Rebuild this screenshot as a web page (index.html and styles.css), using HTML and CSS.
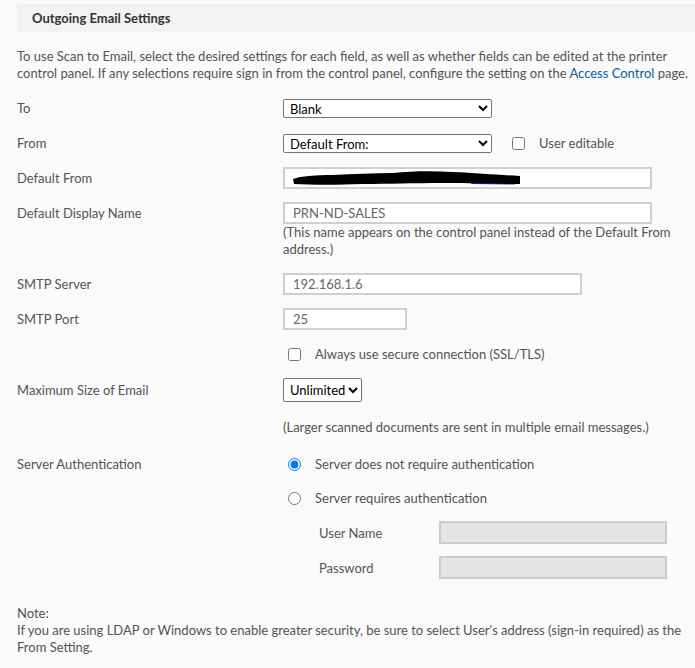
FILE: index.html
```html
<!DOCTYPE html>
<html lang="en">
    <head>
        <meta charset="UTF-8" />
        <meta name="viewport" content="width=device-width, initial-scale=1.0" />
        <title>Outgoing Email Settings</title>
        <link rel="stylesheet" href="styles.css">
    </head>
    <body>
        <main class="page">
            <h2 class="section-title">Outgoing Email Settings</h2>
            <p class="intro">
                To use Scan to Email, select the desired settings for each field, as well as whether fields can be edited at the printer
                control panel. If any selections require sign in from the control panel, configure the setting on the
                <a href="#" class="link">Access Control</a> page.
            </p>

            <form class="settings">
                <div class="row">
                    <label class="label" for="to">To</label>
                    <select id="to" class="select select-wide">
                        <option>Blank</option>
                    </select>
                </div>

                <div class="row">
                    <label class="label" for="from">From</label>
                    <select id="from" class="select select-wide">
                        <option>Default From:</option>
                    </select>
                    <input type="checkbox" id="fromEditable" class="check check-inline" />
                    <label for="fromEditable" class="check-label">User editable</label>
                </div>

                <div class="row">
                    <label class="label">Default From</label>
                    <div class="text-box box-long">
                        <svg class="redact" width="228" height="16" viewBox="0 0 228 16">
                            <path d="M1 11 L48 12" stroke="#2b22e0" stroke-width="2" fill="none" />
                            <path d="M178 13 L222 13.5" stroke="#2b22e0" stroke-width="2" fill="none" />
                            <path d="M0 9 C8 6 22 5 40 5 C60 4 80 3 100 3 C120 1 140 1 160 2 C185 3 205 5 227 6 L227 14 C205 14 180 13 150 13 C120 13 95 14 70 14 C45 15 20 15 1 14 Z" fill="#000" />
                        </svg>
                    </div>
                </div>

                <div class="row row-top">
                    <label class="label label-tall" for="displayName">Default Display Name</label>
                    <div class="field">
                        <input type="text" id="displayName" class="text-box box-long" value="PRN-ND-SALES" />
                        <p class="hint">(This name appears on the control panel instead of the Default From address.)</p>
                    </div>
                </div>

                <div class="row row-gap">
                    <label class="label" for="smtpServer">SMTP Server</label>
                    <input type="text" id="smtpServer" class="text-box box-mid" value="192.168.1.6" />
                </div>

                <div class="row">
                    <label class="label" for="smtpPort">SMTP Port</label>
                    <input type="text" id="smtpPort" class="text-box box-short" value="25" />
                </div>

                <div class="row">
                    <span class="label"></span>
                    <input type="checkbox" id="ssl" class="check" />
                    <label for="ssl" class="check-label">Always use secure connection (SSL/TLS)</label>
                </div>

                <div class="row row-select">
                    <label class="label" for="maxSize">Maximum Size of Email</label>
                    <select id="maxSize" class="select select-small">
                        <option>Unlimited</option>
                    </select>
                </div>

                <div class="row row-hint">
                    <span class="label"></span>
                    <p class="hint">(Larger scanned documents are sent in multiple email messages.)</p>
                </div>

                <div class="row row-top row-more">
                    <span class="label label-tall">Server Authentication</span>
                    <div class="auth">
                        <div class="auth-option">
                            <input type="radio" name="auth" id="authNone" class="radio" checked />
                            <label for="authNone" class="check-label">Server does not require authentication</label>
                        </div>
                        <div class="auth-option">
                            <input type="radio" name="auth" id="authReq" class="radio" />
                            <label for="authReq" class="check-label">Server requires authentication</label>
                        </div>
                        <div class="auth-field">
                            <label for="userName" class="sub-label">User Name</label>
                            <input type="text" id="userName" class="text-box box-disabled" disabled />
                        </div>
                        <div class="auth-field">
                            <label for="password" class="sub-label">Password</label>
                            <input type="password" id="password" class="text-box box-disabled" disabled />
                        </div>
                    </div>
                </div>
            </form>

            <div class="note">
                <p>Note:</p>
                <p>If you are using LDAP or Windows to enable greater security, be sure to select User's address (sign-in required) as the From Setting.</p>
            </div>
        </main>
    </body>
</html>
```

FILE: styles.css
```css
* {
    box-sizing: border-box;
}
body {
    margin: 0;
    background-color: #fafafa;
    font-family: Lato, "Liberation Sans", sans-serif;
    font-size: 13px;
    color: #545454;
}
p {
    margin: 0;
}
.page {
    padding: 4px 0 20px 17px;
}
.section-title {
    margin: 0;
    height: 28px;
    line-height: 28px;
    padding-left: 15px;
    background-color: #f2f2f2;
    font-size: 13px;
    font-weight: bold;
    color: #333;
}
.intro {
    margin: 16px 0 15px;
    line-height: 17px;
}
.link {
    color: #0b5c9a;
    text-decoration: none;
}

.settings {
    display: flex;
    flex-direction: column;
    gap: 13px;
}
.row {
    display: flex;
    align-items: center;
    min-height: 22px;
}
.row-top {
    align-items: flex-start;
}
.row-gap {
    margin-top: 2px;
}
.row-hint {
    margin-top: 1px;
}
.row-more {
    margin-top: 2px;
}
.label {
    width: 266px;
    flex: none;
}
.label-tall {
    line-height: 22px;
}

.select {
    height: 19px;
    padding: 0 0 0 2px;
    border: 1px solid #767676;
    border-radius: 2px;
    background-color: #fff;
    font-family: inherit;
    font-size: 13px;
    color: #000;
}
.select-wide {
    width: 209px;
}
.select-small {
    width: 79px;
    height: 24px;
}

.text-box {
    height: 22px;
    padding: 0 8px;
    border: 2px solid #cfcfcf;
    background-color: #fff;
    font-family: inherit;
    font-size: 13px;
    color: #666;
    outline: none;
}
.box-long {
    width: 369px;
}
.box-mid {
    width: 299px;
}
.box-short {
    width: 124px;
}
.box-disabled {
    width: 228px;
    height: 23px;
    background-color: #e5e5e5;
    border-color: #cccccc;
}
div.text-box {
    display: flex;
    align-items: center;
}

.check {
    width: 13px;
    height: 13px;
    margin: 0 0 0 5px;
}
.check-inline {
    margin-left: 20px;
}
.check-label {
    margin-left: 14px;
}
.radio {
    width: 13px;
    height: 13px;
    margin: 0 0 0 5px;
}

.hint {
    line-height: 17px;
}
.field .hint {
    width: 400px;
}

.auth {
    display: flex;
    flex-direction: column;
    gap: 12px;
}
.auth-option {
    display: flex;
    align-items: center;
    height: 22px;
}
.auth-field {
    display: flex;
    align-items: center;
    padding-left: 36px;
}
.sub-label {
    width: 120px;
}

.note {
    margin-top: 26px;
    line-height: 17px;
}
```
